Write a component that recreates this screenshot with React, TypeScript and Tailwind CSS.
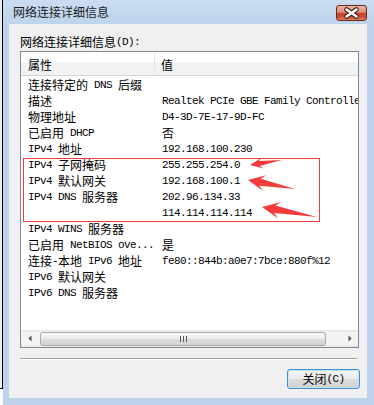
import type { ReactNode } from "react";

const CJK_SPLIT = /([\u2E80-\u9FFF\u3000-\u303F\uFF00-\uFFEF]+)/;
const CJK_TEST = /[\u2E80-\u9FFF\u3000-\u303F\uFF00-\uFFEF]/;

// SimSun-like mixing: 12px ideographs, 6px half-width latin
function Mixed({ text }: { text: string }) {
  const parts = text.split(CJK_SPLIT).filter(Boolean);
  return (
    <>
      {parts.map((part, i) =>
        CJK_TEST.test(part) ? (
          <span key={i} className="font-['Noto_Sans_CJK_SC',sans-serif] text-[12px]">
            {part}
          </span>
        ) : (
          <span
            key={i}
            className="font-['Liberation_Mono',monospace] text-[11px] leading-[12px] tracking-[-0.6px] align-[2px]"
          >
            {part}
          </span>
        ),
      )}
    </>
  );
}

const rows: [string, string][] = [
  ["连接特定的 DNS 后缀", ""],
  ["描述", "Realtek PCIe GBE Family Controller"],
  ["物理地址", "D4-3D-7E-17-9D-FC"],
  ["已启用 DHCP", "否"],
  ["IPv4 地址", "192.168.100.230"],
  ["IPv4 子网掩码", "255.255.254.0"],
  ["IPv4 默认网关", "192.168.100.1"],
  ["IPv4 DNS 服务器", "202.96.134.33"],
  ["", "114.114.114.114"],
  ["IPv4 WINS 服务器", ""],
  ["已启用 NetBIOS ove...", "是"],
  ["连接-本地 IPv6 地址", "fe80::844b:a0e7:7bce:880f%12"],
  ["IPv6 默认网关", ""],
  ["IPv6 DNS 服务器", ""],
];

type Pt = [number, number];

function arrowPoints(tip: Pt, tail: Pt, headLen: number, headW: number, shaftW: number) {
  const dx = tail[0] - tip[0];
  const dy = tail[1] - tip[1];
  const len = Math.hypot(dx, dy);
  const ux = dx / len;
  const uy = dy / len;
  const nx = -uy;
  const ny = ux;
  const at = (along: number, side: number): Pt => [
    tip[0] + ux * along + nx * side,
    tip[1] + uy * along + ny * side,
  ];
  const pts: Pt[] = [
    tip,
    at(headLen, headW),
    at(headLen * 0.72, shaftW),
    tail,
    at(headLen * 0.72, -shaftW),
    at(headLen, -headW),
  ];
  return pts.map((p) => `${p[0].toFixed(1)},${p[1].toFixed(1)}`).join(" ");
}

const arrows = [
  { tip: [250, 165] as Pt, tail: [282, 160] as Pt, h: 13, w: 5.5, s: 2.6 },
  { tip: [248, 180] as Pt, tail: [295, 189] as Pt, h: 17, w: 8, s: 3.6 },
  { tip: [262, 207] as Pt, tail: [317, 217] as Pt, h: 18, w: 8.5, s: 3.8 },
];

function Annotations() {
  return (
    <svg
      className="pointer-events-none absolute left-0 top-0"
      width={374}
      height={405}
      viewBox="0 0 374 405"
    >
      <rect x={23.5} y={158.5} width={296} height={63} fill="none" stroke="#f23b3b" strokeWidth={1} />
      {arrows.map((a, i) => (
        <polygon key={i} points={arrowPoints(a.tip, a.tail, a.h, a.w, a.s)} fill="#f43c3c" />
      ))}
    </svg>
  );
}

function CloseButton() {
  return (
    <div className="mt-[5px] flex h-[16px] w-[31px] items-center justify-center rounded-[3px] border border-[#6b2a20] bg-[linear-gradient(to_bottom,#ebb3a5_0%,#db8c77_45%,#c8472f_52%,#c94a31_75%,#df7c60_100%)]">
      <svg width="29" height="14" viewBox="0 0 29 14">
        <path d="M9.5 3.5 L19.5 10.5 M19.5 3.5 L9.5 10.5" stroke="#3f1a12" strokeWidth="4.6" strokeLinecap="round" />
        <path d="M9.5 3.5 L19.5 10.5 M19.5 3.5 L9.5 10.5" stroke="#ffffff" strokeWidth="2.6" strokeLinecap="round" />
      </svg>
    </div>
  );
}

function Row({ label, value }: { label: string; value: string }) {
  return (
    <div className="flex h-[16px] whitespace-pre font-['Noto_Sans_CJK_SC',sans-serif] text-[12px] leading-[16px] text-black">
      <div className="w-[134px] shrink-0 pl-[7px]">
        <Mixed text={label} />
      </div>
      <div className="shrink-0 pl-[7px]">
        <Mixed text={value} />
      </div>
    </div>
  );
}

function HScrollbar() {
  return (
    <div className="flex h-[17px] items-center bg-[linear-gradient(to_bottom,#e3e3e3_0%,#f3f3f3_15%,#f3f3f3_85%,#e6e6e6_100%)]">
      <div className="flex h-full w-[17px] items-center justify-center">
        <svg width="4" height="7" viewBox="0 0 4 7">
          <path d="M3.5 0.5 L0.5 3.5 L3.5 6.5 Z" fill="#4a4a4a" />
        </svg>
      </div>
      <div className="ml-[2px] flex h-[14px] w-[286px] items-center justify-center rounded-[3px] border border-[#a9a9a9] bg-[linear-gradient(to_bottom,#f7f7f7_0%,#ececec_45%,#dcdcdc_55%,#d4d4d4_100%)]">
        <div className="flex gap-[2px]">
          <div className="h-[6px] w-px bg-[#5a5a5a]" />
          <div className="h-[6px] w-px bg-[#5a5a5a]" />
          <div className="h-[6px] w-px bg-[#5a5a5a]" />
        </div>
      </div>
      <div className="flex-1" />
      <div className="flex h-full w-[17px] items-center justify-center">
        <svg width="4" height="7" viewBox="0 0 4 7">
          <path d="M0.5 0.5 L3.5 3.5 L0.5 6.5 Z" fill="#4a4a4a" />
        </svg>
      </div>
    </div>
  );
}

function Section({ children }: { children: ReactNode }) {
  return <div className="flex flex-col">{children}</div>;
}

export default function App() {
  return (
    <div className="relative flex h-[405px] w-[374px] overflow-hidden bg-white">
      <div className="h-[389px] w-[3px] shrink-0 border-b border-r border-black bg-[#ececec]" />

      <div className="flex w-[371px] flex-col bg-[#bdd3ec]">
        <div className="flex h-[24px] items-start justify-between bg-[linear-gradient(to_bottom,#cadcf1,#bed4ec)] pl-[10px] pr-[7px]">
          <div className="pt-[4px] font-['Noto_Sans_CJK_SC',sans-serif] text-[12px] leading-[16px] text-[#1b1b1b]">
            网络连接详细信息
          </div>
          <CloseButton />
        </div>

        <div className="ml-[6px] flex h-[374px] w-[358px] flex-col bg-[#f0f0f0] pl-[11px] pt-[10px]">
          <Section>
            <div className="h-[17px] whitespace-pre font-['Noto_Sans_CJK_SC',sans-serif] text-[12px] leading-[16px] text-black">
              <Mixed text="网络连接详细信息(D):" />
            </div>

            <div className="flex h-[297px] w-[339px] flex-col border border-[#828790] bg-white">
              <div className="flex h-[24px] shrink-0 border-b border-[#d5d5d5] bg-[linear-gradient(to_bottom,#ffffff_0%,#ffffff_45%,#f1f2f4_46%,#f1f2f4_100%)] font-['Noto_Sans_CJK_SC',sans-serif] text-[12px] leading-[23px] text-black">
                <div className="w-[134px] border-r border-[#e3e5e8] pl-[7px] pt-px">属性</div>
                <div className="pl-[6px] pt-px">值</div>
              </div>
              <div className="flex-1 overflow-hidden pt-px">
                {rows.map(([label, value], i) => (
                  <Row key={i} label={label} value={value} />
                ))}
              </div>
              <HScrollbar />
            </div>

            <div className="mt-[10px] w-[337px] border-t border-b border-t-[#a0a0a0] border-b-white" />

            <div className="mt-[9px] flex w-[340px] justify-end">
              <div className="flex h-[20px] w-[73px] items-center justify-center rounded-[3px] border border-[#3c8fd8] bg-[linear-gradient(to_bottom,#f4f4f4_0%,#ebebeb_48%,#dddddd_52%,#cfcfcf_100%)] shadow-[inset_0_0_0_1px_#c4e5f6] whitespace-pre font-['Noto_Sans_CJK_SC',sans-serif] text-[12px] leading-[16px] text-black">
                <Mixed text="关闭(C)" />
              </div>
            </div>
          </Section>
        </div>
      </div>

      <Annotations />
    </div>
  );
}
